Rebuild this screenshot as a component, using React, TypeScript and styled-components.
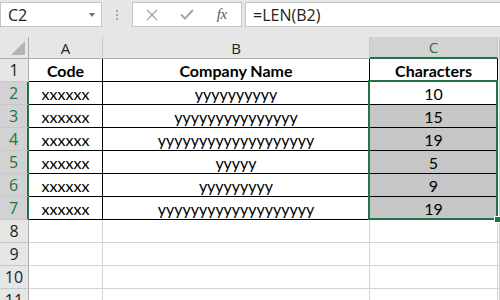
import styled, { createGlobalStyle } from 'styled-components';

const green = '#217346';
const grid = '#d4d4d4';
const headerBg = '#e6e6e6';
const headerSel = '#d2d2d2';
const uiFont = `"Open Sans", "Noto Sans", sans-serif`;
const cellFont = `Lato, "Liberation Sans", sans-serif`;

const GlobalStyle = createGlobalStyle`
   html, body {
      margin: 0;
      padding: 0;
      width: 500px;
      height: 300px;
      overflow: hidden;
      background: #ffffff;
   }
`;

const Window = styled.div`
   width: 500px;
   height: 300px;
   overflow: hidden;
   background: ${headerBg};
   display: flex;
   flex-direction: column;
`;

const FormulaBar = styled.div`
   flex-shrink: 0;
   height: 37px;
   display: flex;
   align-items: flex-start;
   padding-top: 2px;
   box-sizing: border-box;
`;

const NameBox = styled.div`
   width: 102px;
   height: 25px;
   box-sizing: border-box;
   background: #fff;
   border: 1px solid #c6c6c6;
   display: flex;
   align-items: center;
   justify-content: space-between;
   padding: 0 6px 0 7px;
   font-family: ${uiFont};
   font-size: 16px;
   color: #222;
`;

const DropArrow = styled.span`
   width: 0;
   height: 0;
   border-left: 3.5px solid transparent;
   border-right: 3.5px solid transparent;
   border-top: 4px solid #6f6f6f;
`;

const Grip = styled.div`
   width: 30px;
   height: 25px;
   display: flex;
   flex-direction: column;
   align-items: center;
   justify-content: center;
   gap: 2px;

   span {
      width: 2px;
      height: 2px;
      background: #a6a6a6;
   }
`;

const ButtonBox = styled.div`
   width: 110px;
   height: 25px;
   box-sizing: border-box;
   background: #fff;
   border: 1px solid #c6c6c6;
   display: grid;
   grid-template-columns: repeat(3, 1fr);
   align-items: center;
   justify-items: center;
   padding: 0 2px;
`;

const Fx = styled.span`
   font-family: "Liberation Serif", serif;
   font-style: italic;
   font-size: 15px;
   color: #595959;
   letter-spacing: -0.5px;
`;

const FormulaInput = styled.div`
   flex: 1;
   margin-left: 3px;
   height: 25px;
   box-sizing: border-box;
   background: #fff;
   border: 1px solid #c6c6c6;
   border-right: none;
   display: flex;
   align-items: center;
   padding-left: 7px;
   font-family: ${uiFont};
   font-size: 16px;
   color: #222;
`;

const Sheet = styled.div`
   flex-shrink: 0;
   display: grid;
   grid-template-columns: 29px 74px 267px 128px 1fr;
   grid-template-rows: 22px repeat(11, 23px);
   background: #fff;
`;

const ColHead = styled.div<{ $sel?: boolean }>`
   box-sizing: border-box;
   background: ${(p) => (p.$sel ? headerSel : headerBg)};
   border-right: 1px solid #c8c8c8;
   border-bottom: ${(p) => (p.$sel ? `2px solid ${green}` : '1px solid #ababab')};
   display: flex;
   align-items: center;
   justify-content: center;
   font-family: ${uiFont};
   font-size: 15px;
   color: ${(p) => (p.$sel ? green : '#222')};
`;

const Corner = styled.div`
   box-sizing: border-box;
   background: ${headerBg};
   border-right: 1px solid #ababab;
   border-bottom: 1px solid #ababab;
   position: relative;

   &::after {
      content: '';
      position: absolute;
      right: 3px;
      bottom: 3px;
      width: 0;
      height: 0;
      border-left: 14px solid transparent;
      border-bottom: 14px solid #b4b4b4;
   }
`;

const RowHead = styled.div<{ $sel?: boolean }>`
   box-sizing: border-box;
   background: ${(p) => (p.$sel ? headerSel : headerBg)};
   border-right: ${(p) => (p.$sel ? `2px solid ${green}` : '1px solid #ababab')};
   border-bottom: 1px solid #c8c8c8;
   display: flex;
   align-items: center;
   justify-content: center;
   font-family: ${uiFont};
   font-size: 16px;
   color: ${(p) => (p.$sel ? green : '#222')};
`;

const Cell = styled.div<{ $bold?: boolean; $fill?: boolean; $table?: boolean }>`
   position: relative;
   box-sizing: border-box;
   border-right: 1px solid ${(p) => (p.$table ? '#000' : grid)};
   border-bottom: 1px solid ${(p) => (p.$table ? '#000' : grid)};
   background: ${(p) => (p.$fill ? '#c6c6c6' : '#fff')};
   display: flex;
   align-items: flex-end;
   justify-content: center;
   padding-bottom: 1px;
   font-family: ${cellFont};
   font-size: 16px;
   font-weight: ${(p) => (p.$bold ? 700 : 400)};
   color: #000;
   white-space: nowrap;
`;

// green outline over C2:C7, anchored on the active cell
const Selection = styled.div<{ $rows: number }>`
   position: absolute;
   left: -2px;
   top: -2px;
   width: 130px;
   height: ${(p) => p.$rows * 23 + 2}px;
   box-sizing: border-box;
   border: 2px solid ${green};
   pointer-events: none;
   z-index: 2;
`;

const FillHandle = styled.span`
   position: absolute;
   right: -5px;
   bottom: -5px;
   width: 5px;
   height: 5px;
   background: ${green};
   border: 1px solid #fff;
`;

const rows = [
   { code: 'Code', name: 'Company Name', chars: 'Characters', bold: true },
   { code: 'xxxxxx', name: 'yyyyyyyyyy', chars: '10' },
   { code: 'xxxxxx', name: 'yyyyyyyyyyyyyyy', chars: '15' },
   { code: 'xxxxxx', name: 'yyyyyyyyyyyyyyyyyyy', chars: '19' },
   { code: 'xxxxxx', name: 'yyyyy', chars: '5' },
   { code: 'xxxxxx', name: 'yyyyyyyyy', chars: '9' },
   { code: 'xxxxxx', name: 'yyyyyyyyyyyyyyyyyyy', chars: '19' },
];

function CrossIcon() {
   return (
      <svg width="12" height="12" viewBox="0 0 12 12">
         <path d="M1 1 L11 11 M11 1 L1 11" stroke="#a6a6a6" strokeWidth="1.4" fill="none" />
      </svg>
   );
}

function CheckIcon() {
   return (
      <svg width="14" height="11" viewBox="0 0 14 11">
         <path d="M1 5.5 L5 9.5 L13 1" stroke="#a6a6a6" strokeWidth="2" fill="none" />
      </svg>
   );
}

export default function App() {
   return (
      <Window>
         <GlobalStyle />
         <FormulaBar>
            <NameBox>
               C2
               <DropArrow />
            </NameBox>
            <Grip>
               <span />
               <span />
               <span />
            </Grip>
            <ButtonBox>
               <CrossIcon />
               <CheckIcon />
               <Fx>fx</Fx>
            </ButtonBox>
            <FormulaInput>=LEN(B2)</FormulaInput>
         </FormulaBar>
         <Sheet>
            <Corner />
            <ColHead>A</ColHead>
            <ColHead>B</ColHead>
            <ColHead $sel>C</ColHead>
            <ColHead />
            {Array.from({ length: 11 }, (_, i) => {
               const r = rows[i];
               const sel = i >= 1 && i <= 6;
               return [
                  <RowHead key={`h${i}`} $sel={sel}>
                     {i + 1}
                  </RowHead>,
                  <Cell key={`a${i}`} $table={!!r} $bold={r?.bold}>
                     {r?.code}
                  </Cell>,
                  <Cell key={`b${i}`} $table={!!r} $bold={r?.bold}>
                     {r?.name}
                  </Cell>,
                  <Cell key={`c${i}`} $table={!!r} $bold={r?.bold} $fill={i >= 2 && i <= 6}>
                     {r?.chars}
                     {i === 1 && (
                        <Selection $rows={6}>
                           <FillHandle />
                        </Selection>
                     )}
                  </Cell>,
                  <Cell key={`d${i}`} />,
               ];
            })}
         </Sheet>
      </Window>
   );
}
